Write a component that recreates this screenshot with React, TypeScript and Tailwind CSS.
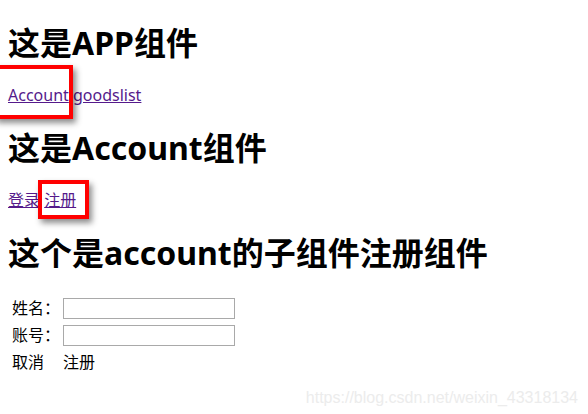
const font = "font-['Noto_Sans','Noto_Sans_CJK_SC',sans-serif]"

function Marker({ className }: { className: string }) {
  return (
    <div
      className={`pointer-events-none absolute border-[4px] border-[#ff0000] shadow-[3px_4px_6px_rgba(0,0,0,0.45)] ${className}`}
    />
  )
}

export default function App() {
  return (
    <div className={`relative min-h-[414px] overflow-hidden bg-white px-2 pt-[22px] text-black ${font}`}>
      <h1 className="text-[32px] font-bold leading-[42px]">这是APP组件</h1>
      <div className="mt-[21px] text-[16px] leading-[21px]">
        <a href="#account" className="text-[#551a8b] underline">Account</a>{' '}
        <a href="#goodslist" className="text-[#551a8b] underline">goodslist</a>
      </div>

      <h1 className="mt-[21px] text-[32px] font-bold leading-[42px]">这是Account组件</h1>
      <div className="mt-[21px] text-[16px] leading-[21px]">
        <a href="#login" className="text-[#551a8b] underline">登录</a>{' '}
        <a href="#register" className="text-[#551a8b] underline">注册</a>
      </div>

      <h1 className="mt-[21px] text-[32px] font-bold leading-[42px]">这个是account的子组件注册组件</h1>

      <div className="mt-[24px] grid grid-cols-[51px_auto] gap-y-[6px] pl-[4px] text-[16px] leading-[21px]">
        <label className="h-[21px]">姓名：</label>
        <input className="h-[21px] w-[172px] border border-[#a9a9a9] px-1 text-[13px] outline-none" />
        <label className="h-[21px]">账号：</label>
        <input className="h-[21px] w-[172px] border border-[#a9a9a9] px-1 text-[13px] outline-none" />
        <span>取消</span>
        <span>注册</span>
      </div>

      <Marker className="left-[-6px] top-[65px] h-[54px] w-[79px]" />
      <Marker className="left-[38px] top-[180px] h-[39px] w-[51px]" />

      <div className="pointer-events-none absolute right-[10px] top-[386px] font-['Liberation_Sans',sans-serif] text-[16px] text-[#ececec]">
        https://blog.csdn.net/weixin_43318134
      </div>
    </div>
  )
}
